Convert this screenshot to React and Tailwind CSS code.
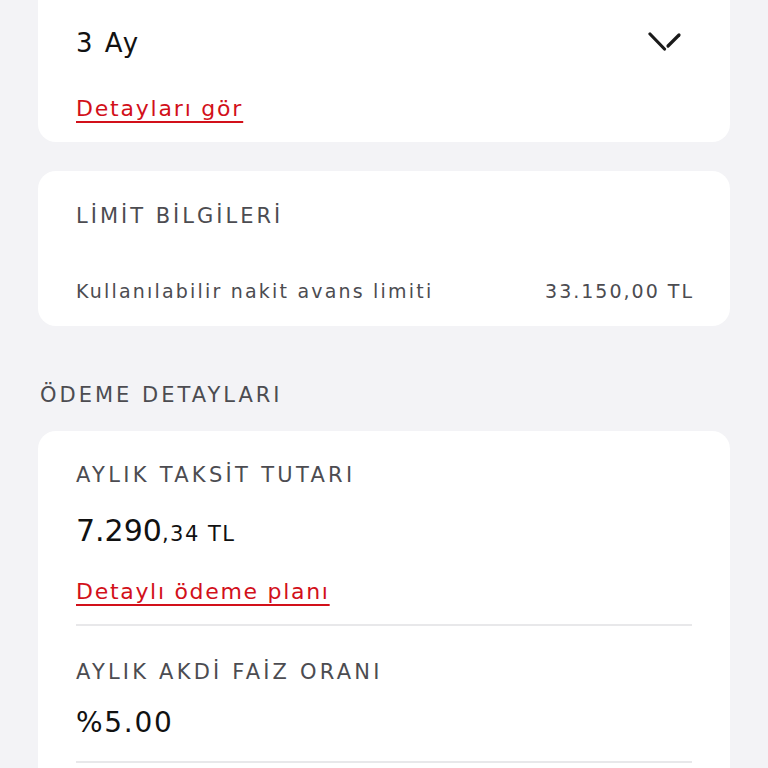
import React from "react";

const font = { fontFamily: "'DejaVu Sans', 'Noto Sans', sans-serif" };

function Chevron() {
  return (
    <svg width="36" height="22" viewBox="0 0 36 22" fill="none">
      <path d="M2 3 L16.5 18" stroke="#1a1a1a" strokeWidth="3.2" strokeLinecap="round" />
      <path d="M20 15 L31 4" stroke="#1a1a1a" strokeWidth="3.2" strokeLinecap="round" />
    </svg>
  );
}

export default function App() {
  return (
    <div className="min-h-screen w-full bg-[#f3f3f6] px-[38px] overflow-hidden" style={font}>
      {/* Card 1 */}
      <div className="-mt-[20px] rounded-[18px] bg-white px-[38px] pt-[43px] pb-[19px]">
        <div className="flex h-[40px] items-center justify-between">
          <span className="text-[26px] tracking-[2px] text-[#111]">3 Ay</span>
          <span className="mr-[8px] mt-[-2px]"><Chevron /></span>
        </div>
        <div className="mt-[30px] flex h-[30px] items-center">
          <span className="text-[22px] tracking-[1.8px] text-[#d2101a] underline underline-offset-[5px] decoration-[2px]">Detayları gör</span>
        </div>
      </div>

      {/* Card 2 */}
      <div className="mt-[29px] rounded-[18px] bg-white px-[38px] pt-[32px] pb-[21px]">
        <div className="flex h-[28px] items-center">
          <span className="text-[21px] tracking-[3px] text-[#4c4c51]">LİMİT BİLGİLERİ</span>
        </div>
        <div className="mt-[46px] flex h-[28px] items-center justify-between">
          <span className="text-[19px] tracking-[2.2px] text-[#4c4c51]">Kullanılabilir nakit avans limiti</span>
          <span className="text-[19px] tracking-[2px] text-[#4c4c51] mr-[-2px]">33.150,00 TL</span>
        </div>
      </div>

      {/* Section title */}
      <div className="mt-[56px] flex h-[28px] items-center pl-[2px]">
        <span className="text-[21px] tracking-[3px] text-[#4c4c51]">ÖDEME DETAYLARI</span>
      </div>

      {/* Card 3 */}
      <div className="mt-[21px] rounded-[18px] bg-white px-[38px] pt-[31px] pb-[40px]">
        <div className="flex h-[28px] items-center">
          <span className="text-[21px] tracking-[3.3px] text-[#4c4c51]">AYLIK TAKSİT TUTARI</span>
        </div>
        <div className="mt-[16px] flex h-[40px] items-end">
          <span className="text-[30px] leading-none text-[#111]">7.290</span>
          <span className="text-[21px] tracking-[1.5px] leading-none text-[#111] mb-[1px]">,34 TL</span>
        </div>
        <div className="mt-[30px] flex h-[30px] items-center">
          <span className="text-[22px] tracking-[1.7px] text-[#d2101a] underline underline-offset-[5px] decoration-[2px]">Detaylı ödeme planı</span>
        </div>
        <div className="mt-[18px] h-[2px] bg-[#e8e8ea]" />
        <div className="mt-[33px] flex h-[28px] items-center">
          <span className="text-[21px] tracking-[3.2px] text-[#4c4c51]">AYLIK AKDİ FAİZ ORANI</span>
        </div>
        <div className="mt-[18px] flex h-[36px] items-center">
          <span className="text-[28px] tracking-[1.7px] text-[#111]">%5.00</span>
        </div>
        <div className="mt-[20px] h-[2px] bg-[#e8e8ea]" />
      </div>
    </div>
  );
}
